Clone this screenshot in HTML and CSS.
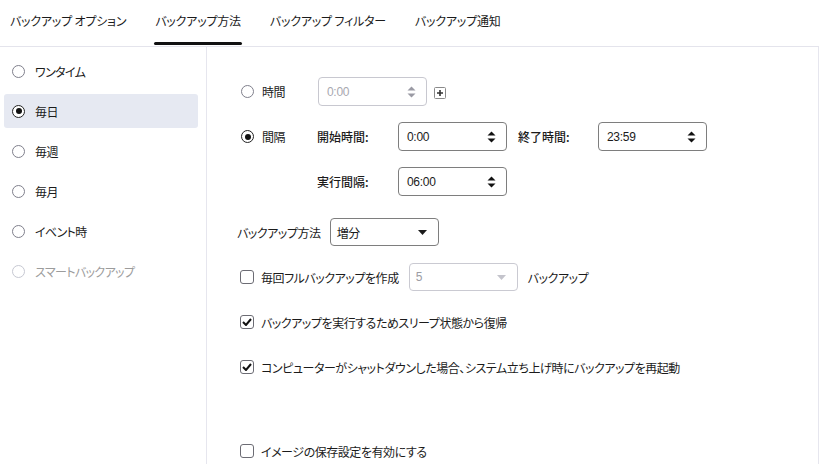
FILE: index.html
```html
<!DOCTYPE html>
<html lang="ja">
<head>
<meta charset="utf-8">
<link rel="stylesheet" href="styles.css">
</head>
<body>
<div class="app">
  <nav class="tabs">
    <div class="tab">バックアップ オプション</div>
    <div class="tab active">バックアップ方法</div>
    <div class="tab">バックアップ フィルター</div>
    <div class="tab">バックアップ通知</div>
  </nav>
  <div class="main">
    <aside class="sidebar">
      <div class="side-item"><span class="radio"></span><span>ワンタイム</span></div>
      <div class="side-item selected"><span class="radio on"></span><span>毎日</span></div>
      <div class="side-item"><span class="radio"></span><span>毎週</span></div>
      <div class="side-item"><span class="radio"></span><span>毎月</span></div>
      <div class="side-item"><span class="radio"></span><span>イベント時</span></div>
      <div class="side-item disabled"><span class="radio"></span><span>スマートバックアップ</span></div>
    </aside>
    <section class="content">
      <div class="row row-time">
        <div class="radio-label"><span class="radio"></span><span>時間</span></div>
        <div class="field disabled"><span class="val">0:00</span>
          <svg class="spin" width="9" height="12" viewBox="0 0 9 12"><path d="M4.5 0.5 L8.5 4.5 H0.5 Z M4.5 11.5 L8.5 7.5 H0.5 Z" fill="currentColor"/></svg>
        </div>
        <span class="plus">
          <svg width="12" height="12" viewBox="0 0 12 12"><rect x="0.5" y="0.5" width="11" height="11" rx="1" fill="#fff" stroke="#8a8a8a"/><path d="M6 3 V9 M3 6 H9" stroke="#333" stroke-width="1.6"/></svg>
        </span>
      </div>
      <div class="row row-interval">
        <div class="radio-label"><span class="radio on"></span><span>間隔</span></div>
        <span class="flabel">開始時間:</span>
        <div class="field"><span class="val">0:00</span>
          <svg class="spin" width="9" height="12" viewBox="0 0 9 12"><path d="M4.5 0.5 L8.5 4.5 H0.5 Z M4.5 11.5 L8.5 7.5 H0.5 Z" fill="currentColor"/></svg>
        </div>
        <span class="flabel end">終了時間:</span>
        <div class="field"><span class="val">23:59</span>
          <svg class="spin" width="9" height="12" viewBox="0 0 9 12"><path d="M4.5 0.5 L8.5 4.5 H0.5 Z M4.5 11.5 L8.5 7.5 H0.5 Z" fill="currentColor"/></svg>
        </div>
      </div>
      <div class="row row-every">
        <span class="flabel">実行間隔:</span>
        <div class="field"><span class="val">06:00</span>
          <svg class="spin" width="9" height="12" viewBox="0 0 9 12"><path d="M4.5 0.5 L8.5 4.5 H0.5 Z M4.5 11.5 L8.5 7.5 H0.5 Z" fill="currentColor"/></svg>
        </div>
      </div>
      <div class="row row-method">
        <span class="mlabel">バックアップ方法</span>
        <div class="select"><span class="val">増分</span>
          <svg class="caret" width="9" height="5" viewBox="0 0 9 5"><path d="M0 0 H9 L4.5 5 Z" fill="currentColor"/></svg>
        </div>
      </div>
      <div class="row row-full">
        <span class="check"></span>
        <span class="ctext">毎回フルバックアップを作成</span>
        <div class="select disabled"><span class="val">5</span>
          <svg class="caret" width="9" height="5" viewBox="0 0 9 5"><path d="M0 0 H9 L4.5 5 Z" fill="currentColor"/></svg>
        </div>
        <span class="after">バックアップ</span>
      </div>
      <div class="row row-c1">
        <span class="check on"><svg width="10" height="8" viewBox="0 0 10 8"><path d="M1 4 L4 7 L9 1" fill="none" stroke="#111" stroke-width="2"/></svg></span>
        <span class="ctext">バックアップを実行するためスリープ状態から復帰</span>
      </div>
      <div class="row row-c2">
        <span class="check on"><svg width="10" height="8" viewBox="0 0 10 8"><path d="M1 4 L4 7 L9 1" fill="none" stroke="#111" stroke-width="2"/></svg></span>
        <span class="ctext">コンピューターがシャットダウンした場合、システム立ち上げ時にバックアップを再起動</span>
      </div>
      <div class="row row-c3">
        <span class="check"></span>
        <span class="ctext">イメージの保存設定を有効にする</span>
      </div>
    </section>
  </div>
</div>
</body>
</html>
```

FILE: styles.css
```css
html, body {
  margin: 0;
  padding: 0;
  background: #fff;
}
body {
  font-family: "Noto Sans CJK JP", "Noto Sans", sans-serif;
  font-size: 12px;
  font-feature-settings: "palt";
  color: #1b1b1b;
  width: 819px;
  height: 464px;
  overflow: hidden;
}
.app {
  display: flex;
  flex-direction: column;
  height: 464px;
}
.tabs {
  display: flex;
  gap: 29px;
  padding-left: 10px;
  height: 46px;
  border-bottom: 1px solid #e4e4ec;
  box-sizing: content-box;
}
.tab {
  position: relative;
  line-height: 42px;
  height: 46px;
  font-size: 12px;
  letter-spacing: -0.2px;
  white-space: nowrap;
}
.tab.active::after {
  content: "";
  position: absolute;
  left: -1px;
  right: -1px;
  bottom: 1px;
  height: 3px;
  border-radius: 2px;
  background: #111;
}
.main {
  flex: 1;
  display: flex;
}
.sidebar {
  width: 207px;
  border-right: 1px solid #e6e6ee;
  padding-top: 7px;
  display: flex;
  flex-direction: column;
  gap: 6px;
  box-sizing: border-box;
}
.side-item {
  margin-left: 4px;
  width: 194px;
  height: 34px;
  display: flex;
  align-items: center;
  padding-left: 8px;
  gap: 10px;
  box-sizing: border-box;
  border-radius: 3px;
  font-size: 12px;
  letter-spacing: -0.6px;
}
.side-item.selected {
  background: #e6e9f2;
}
.side-item.disabled {
  color: #9c9c9c;
}
.radio {
  width: 13px;
  height: 13px;
  border: 1px solid #80808c;
  border-radius: 50%;
  box-sizing: border-box;
  background: #fff;
  flex: none;
  position: relative;
}
.side-item.disabled .radio {
  border-color: #c6c8d2;
}
.radio.on {
  border-color: #222;
}
.radio.on::after {
  content: "";
  position: absolute;
  left: 2.5px;
  top: 2.5px;
  width: 6px;
  height: 6px;
  border-radius: 50%;
  background: #111;
}
.content {
  flex: 1;
  border-right: 1px solid #e6e6ee;
  padding-left: 30px;
  padding-top: 30px;
  display: flex;
  flex-direction: column;
  box-sizing: border-box;
}
.row {
  display: flex;
  align-items: center;
  height: 29px;
  white-space: nowrap;
  font-size: 12px;
  letter-spacing: -0.45px;
}
.radio-label {
  display: flex;
  align-items: center;
  gap: 8px;
  width: 80px;
  padding-left: 4px;
  box-sizing: border-box;
}
.row-time .radio-label { width: 81px; }
.row-interval { margin-top: 16px; }
.row-every { margin-top: 16px; padding-left: 80px; }
.row-method { margin-top: 22px; height: 28px; }
.row-full { margin-top: 17px; height: 28px; }
.row-c1 { margin-top: 17px; height: 28px; }
.row-c2 { margin-top: 17px; height: 28px; }
.row-c3 { margin-top: 56px; height: 28px; }

.flabel {
  width: 81px;
  font-weight: 500;
  letter-spacing: 0;
}
.flabel.end {
  margin-left: 11px;
  width: 80px;
}
.field, .select {
  width: 109px;
  height: 29px;
  border: 1px solid #7e7e7e;
  border-radius: 4px;
  box-sizing: border-box;
  display: flex;
  align-items: center;
  justify-content: space-between;
  padding: 0 10px 0 8px;
  color: #1b1b1b;
  font-size: 12px;
  letter-spacing: -0.3px;
  font-family: "Liberation Sans", "Noto Sans CJK JP", sans-serif;
}
.field.disabled {
  border-color: #c8c8d0;
  color: #a8a8b0;
}
.field.disabled .spin { color: #9a9aa4; }
.spin { color: #111; }
.plus {
  margin-left: 7px;
  display: flex;
  margin-top: 2px;
}
.mlabel {
  margin-right: 9px;
}
.select {
  height: 28px;
  padding: 0 11px 0 6px;
}
.select .val {
  font-family: "Noto Sans CJK JP", sans-serif;
  font-size: 12px;
}
.select.disabled {
  border-color: #cacad2;
  color: #9c9ca4;
}
.select.disabled .val {
  font-family: "Liberation Sans", sans-serif;
}
.select.disabled .caret { color: #c4c4cc; }
.check {
  width: 14px;
  height: 14px;
  border: 1px solid #6c6c74;
  border-radius: 3px;
  box-sizing: border-box;
  margin-left: 3px;
  display: flex;
  align-items: center;
  justify-content: center;
  flex: none;
  background: #fff;
}
.ctext {
  margin-left: 7px;
}
.row-full .select {
  margin-left: 10px;
}
.after {
  margin-left: 10px;
}
```
